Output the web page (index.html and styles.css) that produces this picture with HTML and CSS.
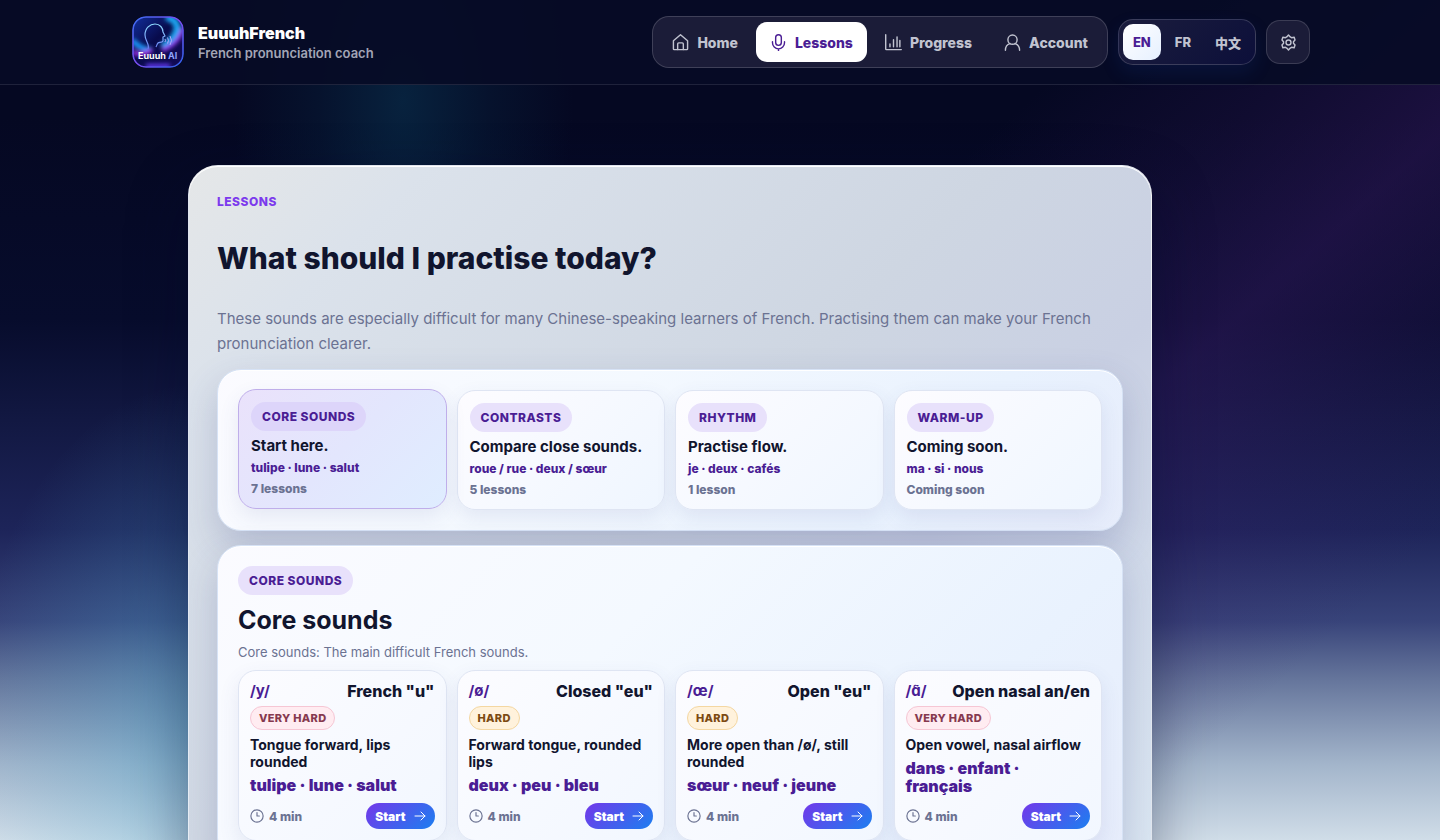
FILE: index.html
```html
<!doctype html>
<html lang="en">
  <head>
    <meta charset="utf-8">
    <meta name="viewport" content="width=device-width, initial-scale=1">
    <title>Lessons - EuuuhFrench</title>
    <link rel="stylesheet" href="styles.css">
  </head>
  <body>
    <!-- shared icons -->
    <svg class="sprite" aria-hidden="true">
      <symbol id="i-clock" viewBox="0 0 24 24"><circle cx="12" cy="12" r="10.500"/><path d="M12 6v6h4"/></symbol>
      <symbol id="i-arrow" viewBox="0 0 24 24"><path d="M2 12h20M14 4l8 8-8 8"/></symbol>
    </svg>

    <header class="topbar">
      <div class="topbar-inner">
        <a class="brand" href="#">
          <svg class="logo" viewBox="0 0 52 52" aria-hidden="true">
            <defs>
              <linearGradient id="lg-base" x1="0" y1="0" x2="1" y2="1">
                <stop offset="0" stop-color="#12309f"/>
                <stop offset=".45" stop-color="#080b4c"/>
                <stop offset="1" stop-color="#140a55"/>
              </linearGradient>
              <linearGradient id="lg-ring" x1="0" y1="0" x2="1" y2="1">
                <stop offset="0" stop-color="#3b6df0"/>
                <stop offset=".5" stop-color="#7a4df0"/>
                <stop offset="1" stop-color="#2c62e8"/>
              </linearGradient>
              <linearGradient id="lg-head" x1="0" y1="0" x2="0" y2="1">
                <stop offset="0" stop-color="#8fdcff"/>
                <stop offset="1" stop-color="#6a7df5"/>
              </linearGradient>
              <filter id="lg-blur" x="-30%" y="-30%" width="160%" height="160%"><feGaussianBlur stdDeviation="2"/></filter>
              <clipPath id="lg-clip"><rect x="1" y="1" width="50" height="50" rx="13"/></clipPath>
            </defs>
            <g clip-path="url(#lg-clip)">
              <rect width="52" height="52" fill="url(#lg-base)"/>
              <g filter="url(#lg-blur)" fill="none">
                <path d="M34 1C44 3 47 10 44 17C41 24 36 28 30 31" stroke="#1aa5f2" stroke-width="7"/>
                <path d="M51 12C48 22 42 30 30 34" stroke="#9a3bf5" stroke-width="4"/>
                <path d="M0 24C6 31 12 34 20 34" stroke="#1a9bff" stroke-width="5"/>
                <path d="M0 36C8 40 14 37 20 34" stroke="#b02df0" stroke-width="4"/>
                <path d="M14 50H38" stroke="#6a3cff" stroke-width="4"/>
              </g>
            </g>
            <rect x="1" y="1" width="50" height="50" rx="13" fill="none" stroke="url(#lg-ring)" stroke-width="1.6"/>
            <path d="M16 33C18 28 13 25 13 19C13 12 18 8 23 8C28 8 31 12 31 16L33 20L31 21L31 25C30 27 27 26 26 27C25 28 25 29 24 31" fill="none" stroke="url(#lg-head)" stroke-width="1.2" stroke-linejoin="round"/>
            <path d="M33 23q1 1.500 0 3M35.500 21.500q2 3 0 6M38 20q3 4.500 0 9" fill="none" stroke="#b9a8ff" stroke-width=".9"/>
            <text x="6" y="43" class="logo-text">Euuuh <tspan fill="#8fa4ff">AI</tspan></text>
          </svg>
          <span class="brand-text">
            <strong>EuuuhFrench</strong>
            <small>French pronunciation coach</small>
          </span>
        </a>

        <nav class="nav">
          <a class="nav-link" href="#">
            <svg class="icon" viewBox="0 0 24 24"><path d="M2 9.500 12 1l10 8.500V21a1 1 0 0 1-1 1H3a1 1 0 0 1-1-1z"/><path d="M8 22v-8a1.500 1.500 0 0 1 1.500-1.500h5A1.500 1.500 0 0 1 16 14v8"/></svg>
            Home
          </a>
          <a class="nav-link is-active" href="#" aria-current="page">
            <svg class="icon" viewBox="0 0 24 24"><rect x="8" y="1" width="8" height="15" rx="4"/><path d="M3.500 11v1.500a8.500 8.500 0 0 0 17 0V11M12 21v3"/></svg>
            Lessons
          </a>
          <a class="nav-link" href="#">
            <svg class="icon" viewBox="0 0 24 24"><path d="M1 1v20a1 1 0 0 0 1 1h21M7 14v4M12 8v10M17 4v14M21 9v9"/></svg>
            Progress
          </a>
          <a class="nav-link" href="#">
            <svg class="icon" viewBox="0 0 24 24"><circle cx="12" cy="8" r="6.500"/><path d="M2 23c0-5 3-8.500 6.500-9.500M22 23c0-5-3-8.500-6.500-9.500"/></svg>
            Account
          </a>
        </nav>

        <div class="lang" role="group" aria-label="Language">
          <button class="lang-btn is-active" type="button">EN</button>
          <button class="lang-btn" type="button">FR</button>
          <button class="lang-btn" type="button" lang="zh">中文</button>
        </div>

        <button class="settings" type="button" aria-label="Settings">
          <svg class="icon" viewBox="0 0 24 24"><path d="M9.500 4.200 12 1.500l2.500 2.700 1.800 1 3.700-.7 1.200 4-2.200 2.500v2l2.200 2.500-1.200 4-3.700-.7-1.800 1L12 22.500l-2.500-2.700-1.800-1-3.700.7-1.200-4L5 13v-2L2.800 8.500l1.200-4 3.700.7z"/><circle cx="12" cy="12" r="3.500"/></svg>
        </button>
      </div>
    </header>

    <main class="shell">
      <div class="panel">
        <p class="eyebrow">Lessons</p>
        <h1>What should I practise today?</h1>
        <p class="intro">These sounds are especially difficult for many Chinese-speaking learners of French. Practising them can make your French pronunciation clearer.</p>

        <section class="box grid" aria-label="Categories">
          <button class="category is-active" type="button">
            <span class="pill">Core sounds</span>
            <strong>Start here.</strong>
            <span class="examples">tulipe · lune · salut</span>
            <span class="count">7 lessons</span>
          </button>
          <button class="category" type="button">
            <span class="pill">Contrasts</span>
            <strong>Compare close sounds.</strong>
            <span class="examples">roue / rue · deux / sœur</span>
            <span class="count">5 lessons</span>
          </button>
          <button class="category" type="button">
            <span class="pill">Rhythm</span>
            <strong>Practise flow.</strong>
            <span class="examples">je · deux · cafés</span>
            <span class="count">1 lesson</span>
          </button>
          <button class="category" type="button">
            <span class="pill">Warm-up</span>
            <strong>Coming soon.</strong>
            <span class="examples">ma · si · nous</span>
            <span class="count">Coming soon</span>
          </button>
        </section>

        <section class="box">
          <span class="pill">Core sounds</span>
          <h2>Core sounds</h2>
          <p class="box-desc">Core sounds: The main difficult French sounds.</p>
          <div class="grid">
            <article class="lesson">
              <div class="lesson-head"><span class="ipa">/y/</span><h3>French "u"</h3></div>
              <span class="tag tag-very">Very hard</span>
              <p class="tip">Tongue forward, lips rounded</p>
              <p class="words">tulipe · lune · salut</p>
              <div class="lesson-foot">
                <span class="time"><svg class="icon"><use href="#i-clock"/></svg>4 min</span>
                <button class="start" type="button">Start<svg class="icon"><use href="#i-arrow"/></svg></button>
              </div>
            </article>
            <article class="lesson">
              <div class="lesson-head"><span class="ipa">/ø/</span><h3>Closed "eu"</h3></div>
              <span class="tag tag-hard">Hard</span>
              <p class="tip">Forward tongue, rounded lips</p>
              <p class="words">deux · peu · bleu</p>
              <div class="lesson-foot">
                <span class="time"><svg class="icon"><use href="#i-clock"/></svg>4 min</span>
                <button class="start" type="button">Start<svg class="icon"><use href="#i-arrow"/></svg></button>
              </div>
            </article>
            <article class="lesson">
              <div class="lesson-head"><span class="ipa">/œ/</span><h3>Open "eu"</h3></div>
              <span class="tag tag-hard">Hard</span>
              <p class="tip">More open than /ø/, still rounded</p>
              <p class="words">sœur · neuf · jeune</p>
              <div class="lesson-foot">
                <span class="time"><svg class="icon"><use href="#i-clock"/></svg>4 min</span>
                <button class="start" type="button">Start<svg class="icon"><use href="#i-arrow"/></svg></button>
              </div>
            </article>
            <article class="lesson">
              <div class="lesson-head"><span class="ipa">/ɑ̃/</span><h3>Open nasal an/en</h3></div>
              <span class="tag tag-very">Very hard</span>
              <p class="tip">Open vowel, nasal airflow</p>
              <p class="words">dans · enfant · français</p>
              <div class="lesson-foot">
                <span class="time"><svg class="icon"><use href="#i-clock"/></svg>4 min</span>
                <button class="start" type="button">Start<svg class="icon"><use href="#i-arrow"/></svg></button>
              </div>
            </article>
          </div>
        </section>
      </div>
    </main>
  </body>
</html>
```
FILE: styles.css
```css
* { box-sizing: border-box; }

html {
  min-height: 100%;
  background:
    radial-gradient(ellipse 170px 330px at 28% 12%, rgba(10, 60, 90, .5), rgba(10, 60, 90, .2) 50%, transparent),
    radial-gradient(ellipse 230px 340px at 14% 86%, rgba(70, 165, 205, .45), rgba(70, 165, 205, .2) 50%, transparent),
    linear-gradient(138deg, transparent 48%, rgba(60, 28, 105, .2) 58%, rgba(60, 28, 105, .42) 67%, rgba(60, 28, 105, .2) 76%, transparent 86%),
    linear-gradient(180deg, #050822 0%, #050822 14%, #070c2c 38%, #121842 50%, #1d2459 63%, #38447a 74%, #66769c 81%, #a3b5cb 91%, #d0dde8 100%);
  background-attachment: fixed;
}

body {
  margin: 0;
  font-family: Inter, "Noto Sans CJK SC", sans-serif;
  color: #11152e;
  -webkit-font-smoothing: antialiased;
}

h1, h2, h3, p { margin: 0; }
a { color: inherit; text-decoration: none; }
button { font-family: inherit; color: inherit; cursor: pointer; }

.sprite { display: none; }
.icon {
  width: 17px;
  height: 17px;
  flex: none;
  fill: none;
  stroke: currentColor;
  stroke-width: 2;
  stroke-linecap: round;
  stroke-linejoin: round;
}

/* header */
.topbar {
  background: rgba(7, 11, 38, .9);
  border-bottom: 1px solid rgba(255, 255, 255, .1);
}
.topbar-inner {
  display: flex;
  align-items: center;
  gap: 10px;
  max-width: 1180px;
  min-height: 84px;
  margin: 0 auto;
}
.brand {
  display: flex;
  align-items: center;
  gap: 14px;
  margin-right: auto;
  padding-left: 2px;
}
.logo { width: 52px; height: 52px; border-radius: 14px; }
.logo-text { font-size: 9px; font-weight: 700; fill: #fff; }
.brand-text { display: grid; gap: 2px; }
.brand-text strong { font-size: 16px; line-height: 19px; font-weight: 900; color: #fff; }
.brand-text small { font-size: 13px; line-height: 16px; font-weight: 600; color: #a2a5b6; }

.nav {
  display: flex;
  gap: 4px;
  padding: 5px;
  border: 1px solid rgba(255, 255, 255, .16);
  border-radius: 17px;
  background: #1b1c38;
}
.nav-link {
  display: flex;
  align-items: center;
  gap: 8px;
  height: 40px;
  padding: 0 14px;
  border-radius: 11px;
  font-size: 14px;
  font-weight: 800;
  color: #c1c3d0;
}
.nav-link.is-active { background: #fff; color: #4a1d94; }

.lang {
  display: flex;
  gap: 4px;
  padding: 4px;
  border: 1px solid rgba(255, 255, 255, .16);
  border-radius: 15px;
  background: linear-gradient(135deg, #1b1d3d, #0c0f3a);
  box-shadow: 0 8px 18px rgba(20, 60, 160, .16);
}
.lang-btn {
  height: 36px;
  padding: 0 10px;
  border: 0;
  border-radius: 10px;
  background: none;
  font-size: 13px;
  font-weight: 800;
  color: #c1c3d0;
}
.lang-btn.is-active { background: linear-gradient(135deg, #fff, #e6f0ff); color: #4a1d94; }

.settings {
  display: grid;
  place-items: center;
  width: 44px;
  height: 44px;
  padding: 0;
  border: 1px solid rgba(255, 255, 255, .14);
  border-radius: 14px;
  background: #1b1c38;
  color: #c1c3d0;
}

/* page */
.shell {
  max-width: 1180px;
  margin: 0 auto;
  padding: 80px 158px 60px 58px;
}
.panel {
  padding: 28px;
  border: 1px solid rgba(255, 255, 255, .4);
  border-radius: 30px;
  background: linear-gradient(135deg, #e5e7e8 0%, #dbe2eb 14%, #ced6e2 48%, #c9d0e3 66%, #dce8f3 100%);
  box-shadow: 0 24px 60px rgba(4, 8, 40, .4), inset 0 1px 0 #fff;
}
.eyebrow {
  font-size: 12px;
  line-height: 16px;
  font-weight: 800;
  letter-spacing: .5px;
  text-transform: uppercase;
  color: #7c3aed;
}
h1 {
  margin: 30px 0;
  font-size: 30px;
  line-height: 36px;
  font-weight: 800;
}
.intro { font-size: 15px; line-height: 25px; color: #6b7292; }

.box {
  margin-top: 14px;
  padding: 20px;
  border: 1px solid #d6e2f5;
  border-radius: 24px;
  background: linear-gradient(135deg, #fbfbff 0%, #f4f9ff 40%, #e9f2fe 75%, #e6ecfb 100%);
  box-shadow: 0 16px 36px rgba(60, 70, 130, .22), inset 0 1px 0 #fff;
}
.intro + .box { margin-top: 13px; }
.grid {
  display: grid;
  grid-template-columns: repeat(4, minmax(0, 1fr));
  gap: 10px;
}

.pill {
  display: inline-block;
  justify-self: start;
  padding: 0 11px;
  border-radius: 15px;
  background: #e8e1fb;
  font-size: 12px;
  line-height: 29px;
  font-weight: 800;
  letter-spacing: .5px;
  text-transform: uppercase;
  color: #4a1d94;
}

.category {
  display: grid;
  gap: 6px;
  padding: 12px;
  border: 1px solid #dfe5f3;
  border-radius: 18px;
  background: linear-gradient(135deg, #fdfcff, #eff6ff);
  box-shadow: 0 8px 20px rgba(70, 80, 150, .1);
  text-align: left;
}
.category strong { font-size: 15px; line-height: 17px; font-weight: 700; color: #11152e; }
.category .examples, .category .count { font-size: 12px; line-height: 15px; font-weight: 800; }
.category .examples { color: #4a1d94; }
.category .count { color: #6b7292; }
.category.is-active {
  border-color: #bfaeea;
  background: linear-gradient(135deg, #eae2fb, #e3e6fd 50%, #dfedff);
  transform: translateY(-1px);
}
.category.is-active .pill { background: #ddd5fa; }

h2 {
  margin: 10px 0 8px;
  font-size: 25px;
  line-height: 30px;
  font-weight: 700;
}
.box-desc { margin-bottom: 9px; font-size: 13px; line-height: 18px; color: #6b7292; }

.lesson {
  display: flex;
  flex-direction: column;
  gap: 6px;
  padding: 11px;
  border: 1px solid #dfe5f3;
  border-radius: 18px;
  background: linear-gradient(135deg, #fcfcff, #f2f7ff);
  box-shadow: 0 8px 20px rgba(70, 80, 150, .1);
}
.lesson-head { display: flex; justify-content: space-between; }
.lesson-head h3, .ipa, .words { font-size: 16px; line-height: 18px; font-weight: 800; }
.lesson-head .ipa { font-size: 15px; font-weight: 700; }
.ipa, .words { color: #4a1d94; }
.lesson .words { padding-right: 8px; font-weight: 900; }
.tag {
  align-self: flex-start;
  padding: 0 8px;
  border: 1px solid;
  border-radius: 12px;
  font-size: 11px;
  line-height: 22px;
  font-weight: 800;
  letter-spacing: .3px;
  text-transform: uppercase;
}
.tag-very { border-color: #f6c6d4; background: #ffecf1; color: #86394f; }
.tag-hard { border-color: #f4d7a2; background: #fff2dc; color: #7c4a12; }
.tip { font-size: 14px; line-height: 17px; font-weight: 700; }
.lesson-foot {
  display: flex;
  align-items: center;
  justify-content: space-between;
  margin-top: auto;
  padding-top: 2px;
}
.time { display: flex; align-items: center; gap: 5px; font-size: 12px; font-weight: 800; color: #6b7292; }
.time .icon { width: 14px; height: 14px; }
.start {
  display: flex;
  align-items: center;
  gap: 8px;
  height: 26px;
  padding: 0 9px;
  border: 0;
  border-radius: 13px;
  background: linear-gradient(135deg, #7338ea, #1c7ff0);
  font-size: 12px;
  font-weight: 900;
  color: #fff;
}
.start .icon { width: 12px; height: 12px; }
```
